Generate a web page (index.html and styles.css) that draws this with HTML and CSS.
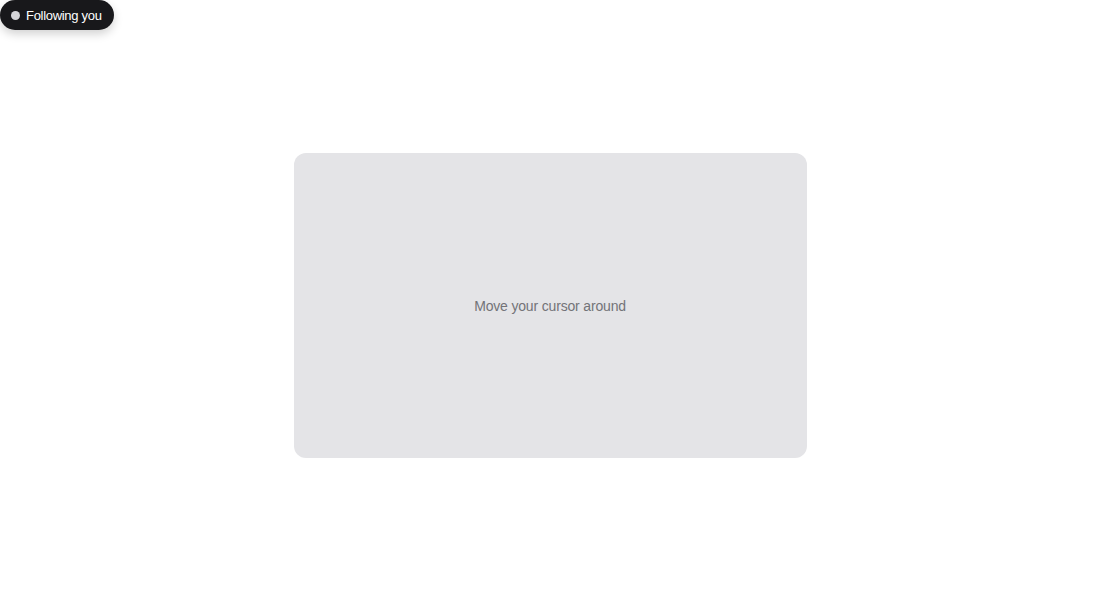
FILE: index.html
```html
<!DOCTYPE html>
<html>
<head>
<meta charset="utf-8">
<link rel="stylesheet" href="styles.css">
</head>
<body>
<div class="stage">
  <div class="card">
    <span class="hint">Move your cursor around</span>
  </div>
</div>
<div class="follower">
  <span class="dot"></span>
  <span class="label">Following you</span>
</div>
</body>
</html>
```
FILE: styles.css
```css
html, body {
  margin: 0;
  padding: 0;
  background: #ffffff;
  font-family: "Liberation Sans", Arial, sans-serif;
}
.stage {
  width: 100vw;
  height: 100vh;
  display: flex;
  align-items: center;
  justify-content: center;
}
.card {
  width: 513px;
  height: 305px;
  border-radius: 12px;
  background: #e4e4e7;
  display: flex;
  align-items: center;
  justify-content: center;
}
.hint {
  font-size: 14px;
  letter-spacing: -0.17px;
  color: #737378;
}
.follower {
  position: absolute;
  left: 0;
  top: 0;
  height: 30px;
  box-sizing: border-box;
  padding: 0 12px 0 11px;
  display: flex;
  align-items: center;
  gap: 6px;
  background: #18181b;
  border-radius: 15px;
  box-shadow: 0 4px 10px rgba(0,0,0,0.18);
}
.dot {
  width: 9px;
  height: 9px;
  border-radius: 50%;
  background: #d4d4d8;
}
.label {
  color: #ffffff;
  font-size: 13px;
  letter-spacing: -0.3px;
}
```
